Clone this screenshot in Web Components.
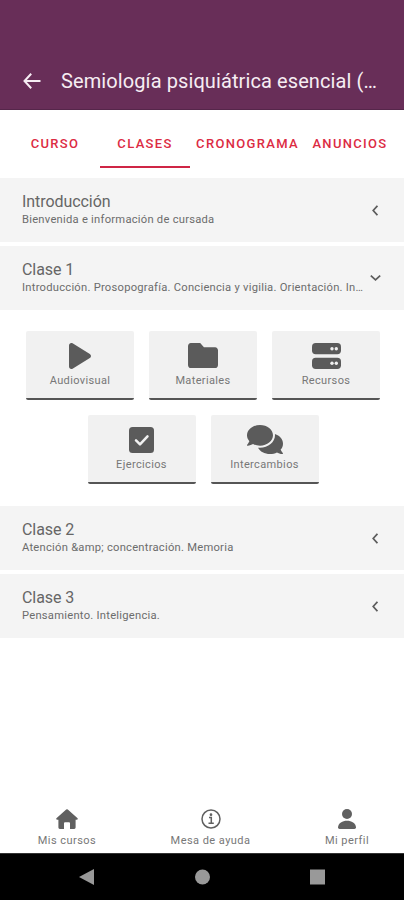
<!DOCTYPE html>
<html lang="es">
<head>
<meta charset="utf-8">
<title>Semiología psiquiátrica esencial</title>
<style>
body{margin:0;background:#fff;font-family:Roboto,"Liberation Sans",sans-serif;color:#666}
</style>
</head>
<body>
<course-app></course-app>
<script>
const ICONS={
back:'<svg width="18" height="16" viewBox="0 0 18 16" fill="none" stroke="currentColor" stroke-width="2"><path d="M8.2 .8L1.500 8l6.700 7.200M1.500 8H17.500"/></svg>',
play:'<svg width="22" height="26" viewBox="0 0 448 512" preserveAspectRatio="none"><path d="M424.400 214.700L72.400 6.600C43.800-10.300 0 6.100 0 47.900V464c0 37.500 40.700 60.100 72.400 41.300l352-208c31.400-18.500 31.500-64.100 0-82.600z"/></svg>',
folder:'<svg width="30" height="25" viewBox="0 64 512 384" preserveAspectRatio="none"><path d="M464 128H272l-64-64H48C21.500 64 0 85.500 0 112v288c0 26.500 21.500 48 48 48h416c26.500 0 48-21.500 48-48V176c0-26.500-21.500-48-48-48z"/></svg>',
server:'<svg width="29" height="26" viewBox="0 0 29 26"><rect width="29" height="11.300" rx="3.700"/><rect y="14.700" width="29" height="11.300" rx="3.700"/><g fill="#f1f1f1"><circle cx="20" cy="5.700" r="1.700"/><circle cx="24.300" cy="5.700" r="1.700"/><circle cx="20" cy="20.300" r="1.700"/><circle cx="24.300" cy="20.300" r="1.700"/></g></svg>',
check:'<svg width="25" height="26" viewBox="0 0 25 26"><rect width="25" height="26" rx="3.500"/><path d="M7 13.300l4 4 7.500-8" fill="none" stroke="#f1f1f1" stroke-width="2.500" stroke-linecap="round" stroke-linejoin="round"/></svg>',
comments:'<svg width="36" height="29" viewBox="0 32 576 448" preserveAspectRatio="none"><path d="M416 192c0-88.400-93.100-160-208-160S0 103.600 0 192c0 34.300 14.100 65.900 38 92-13.400 30.200-35.500 54.200-35.800 54.500-2.200 2.300-2.800 5.700-1.500 8.700S4.800 352 8 352c36.600 0 66.900-12.300 88.700-25 32.200 15.700 70.300 25 111.300 25 114.900 0 208-71.600 208-160zm122 220c23.900-26 38-57.700 38-92 0-66.900-53.500-124.200-129.300-148.100.9 6.600 1.300 13.300 1.300 20.100 0 105.900-107.700 192-240 192-10.800 0-21.300-.8-31.700-1.900C207.800 439.600 281.800 480 368 480c41 0 79.100-9.200 111.300-25 21.800 12.700 52.100 25 88.700 25 3.200 0 6.100-1.900 7.300-4.800 1.300-2.900.7-6.300-1.500-8.700-.3-.3-22.400-24.200-35.800-54.500z"/></svg>',
home:'<svg width="22" height="20" viewBox="0 0 22 20"><path d="M10.200 .5Q11 -.1 11.800 .5L21.600 9.300Q22.300 10.800 20.500 10.800H19.600V18.600Q19.600 20 18.200 20H14V14.200Q14 13.200 13 13.200H9Q8 13.200 8 14.200V20H3.800Q2.400 20 2.400 18.600V10.800H1.500Q-.3 10.800 .4 9.300Z"/></svg>',
info:'<svg width="20" height="20" viewBox="0 0 20 20" fill="none" stroke="currentColor" stroke-width="1.500"><circle cx="10" cy="10" r="9"/><path d="M8 8.500h2.300v5.500M7.500 14.300h5.300"/><circle cx="10" cy="5.700" r=".6" fill="currentColor"/></svg>',
person:'<svg width="18" height="20" viewBox="0 0 18 20"><circle cx="9" cy="5" r="5"/><path d="M0 18.300C.4 13.900 4.400 11.700 9 11.700s8.600 2.200 9 6.600Q18 20 16.400 20H1.600Q0 20 0 18.300Z"/></svg>',
chevron:'<svg width="6" height="11" viewBox="0 0 6 11" fill="none" stroke="currentColor" stroke-width="1.700"><path d="M5.400 .8L1.200 5.500l4.200 4.700"/></svg>',
down:'<svg width="11" height="6" viewBox="0 0 11 6" fill="none" stroke="currentColor" stroke-width="1.700"><path d="M.8 .6L5.500 4.800 10.200 .6"/></svg>',
};
const BASE='*{box-sizing:border-box}svg{display:block;fill:currentColor}svg[fill=none]{fill:none}';
function define(name,render){
  customElements.define(name,class extends HTMLElement{
    connectedCallback(){
      if(this.shadowRoot)return;
      const t=document.createElement('template');
      t.innerHTML='<style>'+BASE+'</style>'+render(this);
      this.attachShadow({mode:'open'}).append(t.content.cloneNode(true));
    }
  });
}
define('app-header',()=>`<style>
:host{display:flex;box-sizing:border-box;height:110px;background:#682e58;color:#f6edf3;padding:70px 0 0 23px;align-items:flex-start;border-bottom:1px solid #55264a}
svg{margin-top:3px;flex:none}
h1{margin:-1px 0 0 20px;font:400 20px/24px Roboto,sans-serif;letter-spacing:.1px;white-space:nowrap}
</style>${ICONS.back}<h1><slot></slot></h1>`);
define('tab-bar',()=>`<style>
:host{display:grid;grid-template-columns:90px 90px 115px 90px;height:58px;padding-left:10px;background:#fff}
</style><slot></slot>`);
define('tab-item',e=>`<style>
:host{display:flex;justify-content:center;align-items:center;padding-top:11px;color:#dc2b43;font:500 13px/16px Roboto,sans-serif;letter-spacing:1.32px;white-space:nowrap;border-bottom:2px solid transparent}
:host([active]){border-color:#cf2545}
</style><slot></slot>`);
define('class-row',e=>`<style>
:host{display:flex;box-sizing:border-box;height:64px;background:#f4f4f4;padding:13px 22px 0}
.t{flex:none;width:346px}
.h{font-size:16px;line-height:21px;letter-spacing:-.06px;color:#666}
.s{font-size:11.200px;line-height:15px;letter-spacing:.25px;color:#6c6c6c;white-space:nowrap}
.i{color:#5c5c5c;width:16px;height:38px;display:flex;align-items:center;justify-content:center}
:host([open]) .i{height:37px}
</style><div class="t"><div class="h"><slot name="title"></slot></div><div class="s"><slot></slot></div></div><div class="i">${e.hasAttribute('open')?ICONS.down:ICONS.chevron}</div>`);
define('card-grid',()=>`<style>
:host{display:flex;box-sizing:border-box;flex-wrap:wrap;justify-content:center;gap:15px;padding:21px 20px 22px 22px;height:196px;align-content:flex-start}
</style><slot></slot>`);
define('resource-card',e=>`<style>
:host{display:flex;box-sizing:border-box;flex-direction:column;align-items:center;width:108px;height:69px;background:#f1f1f1;border-bottom:2px solid #555;border-radius:2px;color:#5b5b5b}
.i{height:49px;display:flex;align-items:center}
.l{font-size:11px;line-height:14px;margin-top:-6px;letter-spacing:.36px;color:#777}
</style><div class="i">${ICONS[e.getAttribute('icon')]}</div><div class="l"><slot></slot></div>`);
define('bottom-nav',()=>`<style>
:host{display:grid;grid-template-columns:134px 153px 120px;height:44px}
</style><slot></slot>`);
define('nav-item',e=>`<style>
:host{display:flex;flex-direction:column;align-items:center;color:#606060}
.l{font-size:11px;line-height:14px;margin-top:5px;letter-spacing:.45px;color:#777;white-space:nowrap}
</style>${ICONS[e.getAttribute('icon')]}<div class="l"><slot></slot></div>`);
define('system-bar',()=>`<style>
:host{display:flex;box-sizing:border-box;height:47px;background:#000;color:#999;border-top:1px solid #333;align-items:center;padding-left:79px}
svg{flex:none}
</style><svg width="255" height="16" viewBox="0 0 255 16"><path d="M15 0v16L0 8z"/><circle cx="123.500" cy="8" r="7.500"/><path d="M231 .5h15v15h-15z"/></svg>`);
define('course-app',()=>`<style>
:host{display:flex;flex-direction:column;width:404px;height:900px;overflow:hidden;background:#fff}
main{flex:1;padding-top:10px}
class-row+class-row{margin-top:4px}
</style>
<app-header>Semiología psiquiátrica esencial (…</app-header>
<tab-bar><tab-item>CURSO</tab-item><tab-item active>CLASES</tab-item><tab-item>CRONOGRAMA</tab-item><tab-item>ANUNCIOS</tab-item></tab-bar>
<main>
<class-row><span slot="title">Introducción</span>Bienvenida e información de cursada</class-row>
<class-row open><span slot="title">Clase 1</span>Introducción. Prosopografía. Conciencia y vigilia. Orientación. In…</class-row>
<card-grid>
<resource-card icon="play">Audiovisual</resource-card><resource-card icon="folder">Materiales</resource-card><resource-card icon="server">Recursos</resource-card><resource-card icon="check">Ejercicios</resource-card><resource-card icon="comments">Intercambios</resource-card>
</card-grid>
<class-row><span slot="title">Clase 2</span>Atención &amp;amp; concentración. Memoria</class-row>
<class-row><span slot="title">Clase 3</span>Pensamiento. Inteligencia.</class-row>
</main>
<bottom-nav><nav-item icon="home">Mis cursos</nav-item><nav-item icon="info">Mesa de ayuda</nav-item><nav-item icon="person">Mi perfil</nav-item></bottom-nav>
<system-bar></system-bar>`);
</script>
</body>
</html>
